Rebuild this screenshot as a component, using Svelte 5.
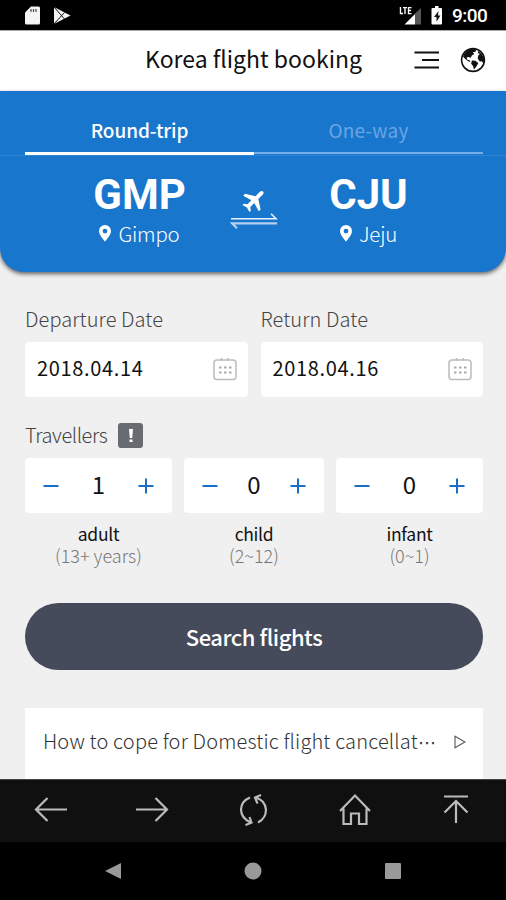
<script>
  const tabs = [
    { label: 'Round-trip', active: true },
    { label: 'One-way', active: false }
  ];
  const dates = [
    { label: 'Departure Date', value: '2018.04.14' },
    { label: 'Return Date', value: '2018.04.16' }
  ];
  const travellers = [
    { kind: 'adult', age: '(13+ years)', count: 1 },
    { kind: 'child', age: '(2~12)', count: 0 },
    { kind: 'infant', age: '(0~1)', count: 0 }
  ];
</script>

{#snippet airport(code, city)}
  <div class="airport">
    <strong>{code}</strong>
    <div class="city">
      <svg width="12" height="17" viewBox="0 0 12 17"><path fill="#fff" fill-rule="evenodd" d="M6 0a6 6 0 0 0-6 6c0 4.200 6 10.500 6 10.500S12 10.200 12 6a6 6 0 0 0-6-6Zm0 3.700a2.400 2.400 0 1 1 0 4.800 2.400 2.400 0 0 1 0-4.800Z" /></svg>
      <span>{city}</span>
    </div>
  </div>
{/snippet}

<div class="screen">
  <div class="status">
    <svg width="48" height="22" viewBox="0 0 48 22">
      <path fill="#f4f4f4" d="M6 1.500h7.500q1.500 0 1.500 1.500v15q0 1.500-1.500 1.500h-12Q0 19.500 0 18V7.500Z" />
      <path stroke="#555" stroke-width="1.300" d="M6 4v3M8.500 4v3M11 4v3" />
      <path fill="#f4f4f4" d="M29 2 45.500 10.500 29 19Z" />
      <path stroke="#111" stroke-width="1" fill="none" d="m29 2 10.500 12M29 19 39.500 7.500" />
    </svg>
    <div class="right">
      <svg width="44" height="24" viewBox="0 0 44 24">
        <path fill="#575757" d="M16 8.500 22 3v16.500h-6Z" />
        <path fill="#fff" d="M5.500 19.500 16 9v10.500Z" />
        <path stroke="#fff" stroke-width="1.400" fill="none" d="M1.500 2v6.500h2.500M4 2.600h4M6 2v7M12.500 2.600H9.500v6h3M9.500 5.500h2.500" />
        <path fill="#fff" d="M36 1h3.500v2H42q1 0 1 1v14.500q0 1-1 1h-8.500q-1 0-1-1V4q0-1 1-1H36Z" />
        <path fill="#111" d="m39.500 6-4.500 6h2.500v4.800l4-6.300H39Z" />
      </svg>
      <span>9:00</span>
    </div>
  </div>

  <header>
    <h1>Korea flight booking</h1>
    <svg class="menu" width="26" height="20" viewBox="0 0 26 20"><path stroke="#111" stroke-width="2" d="M.5 2.500h24.500M8 10h17M.5 17.500h24.500" /></svg>
    <svg class="globe" width="26" height="26" viewBox="0 0 26 26">
      <circle cx="13" cy="13" r="11.400" fill="#fff" stroke="#111" stroke-width="1.600" />
      <path fill="#111" d="M3 9.500C4.500 5 8 2 12.500 1.700l4 1-1.300 2.200-2.500.4 1.600 1.700-2.500 1.600-.9 2.200-2.200-.8-2 .6.5 2.200 2.300.4 1 1.700-2.300-.7-3.200-2.500ZM12 13.500l3.300.3 3 2.300-1.400 2.700-2.900 3.800-1-3.500-1.900-2.600ZM18 4l3.500 2.500 2.500 5 .2 5-2.700-2.200-1.800.2-2-3 .5-3 1.700-1.500-2-1Z" />
    </svg>
  </header>

  <section class="hero">
    <div class="tabs">
      {#each tabs as tab}
        <div class="tab" class:active={tab.active}>{tab.label}</div>
      {/each}
    </div>
    <div class="route">
      {@render airport('GMP', 'Gimpo')}
      <svg class="swap" width="48" height="42" viewBox="0 0 48 42">
        <path fill="#fff" transform="translate(23.500 12) rotate(45)" d="M0-13.500c-1.300 0-2 1.200-2 2.500v6.200L-11 .9v2.600L-2 1v5.500l-3 2.300v1.900L0 9.300l5 1.400V8.800L2 6.500V1l9 2.500V.9L2-4.800V-11c0-1.300-.7-2.500-2-2.500Z" />
        <path fill="none" stroke="#e8f1ff" stroke-width="1.600" d="M1 29.800h45l-5-5" />
        <path fill="none" stroke="#b2d0f3" stroke-width="2.200" d="M47 34.300H2l5 5" />
      </svg>
      {@render airport('CJU', 'Jeju')}
    </div>
  </section>

  <main>
    <div class="dates">
      {#each dates as date}
        <div class="date">
          <div class="label">{date.label}</div>
          <div class="field">
            <span>{date.value}</span>
            <svg width="24" height="24" viewBox="0 0 24 24">
              <rect x="1" y="3" width="22" height="19.500" rx="3" fill="none" stroke="#bcbcbc" stroke-width="1.500" />
              <path stroke="#bcbcbc" stroke-width="1.500" d="M8.500 1v3M15 1v3" />
              <path stroke="#aaa" stroke-width="2" stroke-dasharray="2.500 2.500" d="M6 10.500h13M6 15.500h13" />
            </svg>
          </div>
        </div>
      {/each}
    </div>

    <div class="travel-label"><span class="label">Travellers</span><svg width="25" height="25" viewBox="0 0 25 25"><rect width="25" height="25" rx="3" fill="#686b71" /><path fill="#fff" d="M11 6h4l-.8 9h-2.400ZM11.500 16.500h3v2.500h-3Z" /></svg></div>
    <div class="travellers">
      {#each travellers as t}
        <div class="traveller">
          <div class="stepper">
            <svg width="16" height="16" viewBox="0 0 16 16"><path stroke="#1b6dc7" stroke-width="2" d="M.5 8h15" /></svg>
            <span>{t.count}</span>
            <svg width="16" height="16" viewBox="0 0 16 16"><path stroke="#1b6dc7" stroke-width="2" d="M.5 8h15M8 .5v15" /></svg>
          </div>
          <div class="kind">{t.kind}</div>
          <div class="age">{t.age}</div>
        </div>
      {/each}
    </div>

    <button>Search flights</button>

    <div class="notice">
      <span>How to cope for Domestic flight cancellat<i>⋯</i></span>
      <svg width="12" height="14" viewBox="0 0 12 14"><path fill="none" stroke="#555" stroke-width="1.100" d="M1 1.200 11 7 1 12.800Z" /></svg>
    </div>
  </main>

  <nav class="toolbar">
    <svg width="34" height="34" viewBox="0 0 34 34"><path d="M33 16.500H2M13.500 5 2 16.500 13.500 28" /></svg>
    <svg width="34" height="34" viewBox="0 0 34 34"><path d="M1 16.500h31M20.500 5 32 16.500 20.500 28" /></svg>
    <svg width="34" height="34" viewBox="0 0 34 34"><path d="M13 4.500C2 9 0 23 13.500 29.500M8.500 32l6-2.300-2-5.700M21 29.500C32 24 32 8 18 4.500M24 2l-6 2.500 2.500 6" /></svg>
    <svg width="34" height="34" viewBox="0 0 34 34"><path d="M2 18 17 2.500 32 18M5.500 15.500V31H13V20.500h8V31h7.500V15.500" /></svg>
    <svg width="34" height="34" viewBox="0 0 34 34"><path d="M5 3.500h24M17 30V8M5.500 19.500 17 8l11.500 11.500" /></svg>
  </nav>
  <div class="system">
    <svg width="18" height="18" viewBox="0 0 18 18"><path fill="#999" d="M17 1v16L1 9Z" /></svg>
    <svg width="18" height="18" viewBox="0 0 18 18"><circle cx="9" cy="9" r="8.500" fill="#999" /></svg>
    <svg width="18" height="18" viewBox="0 0 18 18"><rect x="1" y="1" width="16" height="16" rx="1" fill="#999" /></svg>
  </div>
</div>

<style>
  .screen { width: 506px; height: 900px; overflow: hidden; display: flex; flex-direction: column; background: #f0f0f0; font-family: "Noto Sans CJK KR", "Noto Sans", sans-serif; color: #111; }
  svg { display: block; flex: none; }
  .status { height: 30px; flex: none; box-sizing: border-box; background: #000; display: flex; justify-content: space-between; padding: 5px 18px 0 25px; }
  .right { display: flex; gap: 9px; }
  .right span { color: #fff; font: 500 19px/22px Roboto, sans-serif; letter-spacing: -.5px; width: 36px; white-space: nowrap; }
  header { height: 61px; flex: none; box-sizing: border-box; background: #fff; display: flex; align-items: center; padding: 0 20px 2px 145px; border-top: 1px solid #aaa; }
  h1 { margin: -5px 0 0; width: 269px; font-size: 23px; line-height: 34px; font-weight: 400; white-space: nowrap; }
  .globe { margin-left: 20px; }
  .hero { height: 181px; flex: none; background: #1976cd; border-radius: 0 0 24px 24px; box-shadow: 0 2px 4px #0009; }
  .tabs { height: 65px; box-sizing: border-box; display: flex; padding: 0 23px 0 25px; border-bottom: 1px solid #2f85d4; }
  .tab { flex: 1; text-align: center; font-size: 19px; line-height: 28px; padding-top: 25px; height: 36px; color: #69a5e2; border-bottom: 2px solid #74aeea; letter-spacing: .2px; }
  .tab.active { color: #fff; font-weight: 500; border-bottom: 3px solid #fff; letter-spacing: -.1px; }
  .route { display: flex; padding: 0 23px 0 25px; }
  .airport { width: 229px; display: flex; flex-direction: column; align-items: center; color: #fff; }
  .swap { margin: 33px -24px 0; }
  strong { font: 700 42px/44px Roboto, sans-serif; margin-top: 17px; }
  .city { display: flex; gap: 7px; align-items: center; font-size: 20.5px; line-height: 30px; font-weight: 300; margin-top: 1px; letter-spacing: -.2px; }
  main { flex: 1; min-height: 0; overflow: hidden; padding: 33px 23px 0 25px; display: flex; flex-direction: column; }
  .dates { display: flex; gap: 13px; }
  .date { flex: 1; }
  .label { font-size: 20px; line-height: 28px; font-weight: 300; color: #444; white-space: nowrap; letter-spacing: .1px; }
  .field { margin-top: 8.5px; height: 55px; background: #fff; border-radius: 4px; display: flex; align-items: center; justify-content: space-between; padding: 0 11px 0 12px; font-size: 20px; letter-spacing: .65px; }
  .field span { margin-top: -4px; }
  .field svg { margin-top: -1px; }
  .travel-label { display: flex; gap: 11px; height: 30px; margin-top: 26px; align-items: center; }
  .travel-label .label { letter-spacing: -.4px; margin-top: -2px; }
  .travel-label svg { margin-top: -1px; }
  .travellers { display: flex; gap: 12px; margin-top: 9.500px; text-align: center; }
  .traveller { width: 147px; }
  .traveller:nth-child(2) { width: 140px; }
  .stepper { height: 55px; background: #fff; border-radius: 4px; display: flex; align-items: center; justify-content: space-between; padding: 0 18px; font-size: 24px; }
  .stepper span { margin-top: -4px; }
  .kind { font-size: 17.5px; line-height: 22px; margin-top: 10px; letter-spacing: -.3px; }
  .age { font-size: 18px; line-height: 20px; font-weight: 300; color: #777; }
  button { margin: 38px 0 0; padding: 0 0 2px; flex: none; height: 67px; border: 0; border-radius: 34px; background: #454b5b; color: #fff; font: 500 22px/34px "Noto Sans CJK KR", sans-serif; letter-spacing: -.45px; }
  .notice { height: 80px; flex: none; margin-top: 38px; background: #fff; box-sizing: border-box; display: flex; justify-content: space-between; padding: 18px 17px 0 18px; font-size: 20px; line-height: 30px; font-weight: 300; color: #333; white-space: nowrap; letter-spacing: .17px; }
  .notice i { font: normal 18px/20px "DejaVu Sans", sans-serif; letter-spacing: 0; }
  .notice svg { margin-top: 9px; }
  .toolbar { height: 63px; flex: none; box-sizing: border-box; background: #101010; border-top: 1px solid #444; display: flex; justify-content: space-between; padding: 13px 33px 0 34px; }
  .toolbar path { fill: none; stroke: #bbb; stroke-width: 2.2; }
  .system { height: 58px; flex: none; background: #000; display: flex; align-items: center; justify-content: space-between; padding: 0 104px; }
</style>
